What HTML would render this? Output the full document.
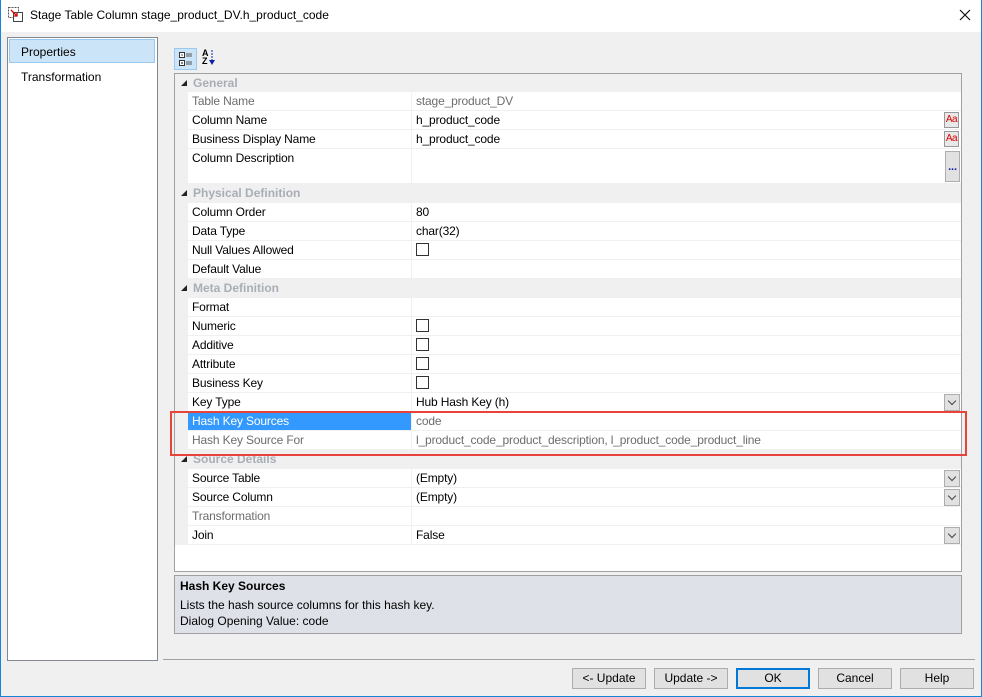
<!DOCTYPE html>
<html><head><meta charset="utf-8"><style>
*{box-sizing:border-box;margin:0;padding:0}
body{width:982px;height:697px;overflow:hidden;background:#f0f0f0;font-family:"Liberation Sans",sans-serif;font-size:12px;color:#000;position:relative}
.a{position:absolute}
.win{left:0;top:0;width:982px;height:697px;border:1px solid #1883d7;border-top:none}
.title{left:1px;top:0;width:980px;height:32px;background:#fff}
.row{position:absolute;left:188px;width:773px;height:19px;border-bottom:1px solid #f0f0f0;background:#fff;letter-spacing:-0.15px}
.row .n{position:absolute;left:4px;top:2px;white-space:nowrap}
.row .v{position:absolute;left:223px;top:0;height:18px;border-left:1px solid #f0f0f0;padding-left:4px;padding-top:2px;width:550px;white-space:nowrap}
.cat{position:absolute;left:175px;width:786px;height:19px;background:#f0f0f0}
.cat .n{position:absolute;left:18px;top:2px;color:#a9aeb6;font-weight:bold}
.cat .t{position:absolute;left:6px;top:6px;width:0;height:0;border-left:6px solid transparent;border-bottom:6px solid #222}
.g{color:#6d6d6d}
.cb{display:inline-block;width:13px;height:13px;border:1px solid #333;background:#fff;margin-top:0px}
.dd{position:absolute;right:1px;top:1px;width:16px;height:17px;background:#e1e1e1;border:1px solid #adadad}
.dd:after{content:"";position:absolute;left:4px;top:3px;width:5px;height:5px;border-right:1px solid #444;border-bottom:1px solid #444;transform:rotate(45deg)}
.aa{position:absolute;right:2px;top:1px;width:15px;height:16px;background:#e8e8e8;border:1px solid #999;color:#d00;font-size:10px;line-height:14px;text-align:center;letter-spacing:-0.5px}
.btn{position:absolute;top:668px;width:74px;height:21px;background:#e1e1e1;border:1px solid #adadad;text-align:center;line-height:19px}
</style></head><body>
<div class="a win"></div>
<div class="a title"></div>
<svg class="a" style="left:8px;top:7px" width="16" height="16"><rect x="0.5" y="0.5" width="10" height="10" fill="none" stroke="#555" stroke-dasharray="2,1"/><rect x="5.5" y="5.5" width="9" height="9" fill="#fff" stroke="#444"/><path d="M3 3 L9 9 M6 9 H9 V6" stroke="#d00" stroke-width="1.3" fill="none"/></svg>
<div class="a" style="left:30px;top:8px;font-size:12px">Stage Table Column stage_product_DV.h_product_code</div>
<svg class="a" style="left:959px;top:9px" width="12" height="12"><path d="M1 1L11 11M11 1L1 11" stroke="#111" stroke-width="1.2"/></svg>

<div class="a" style="left:7px;top:37px;width:151px;height:624px;background:#fff;border:1px solid #828790"></div>
<div class="a" style="left:9px;top:39px;width:146px;height:24px;background:#cce4f7;border:1px solid #99c9ef"></div>
<div class="a" style="left:21px;top:45px">Properties</div>
<div class="a" style="left:21px;top:70px">Transformation</div>

<div class="a" style="left:174px;top:48px;width:23px;height:22px;background:#cce4f7;border:1px solid #99c9ef"></div>
<svg class="a" style="left:178px;top:51px" width="16" height="16"><rect x="1.5" y="1.5" width="5" height="5" fill="#fff" stroke="#333"/><rect x="1.5" y="9.5" width="5" height="5" fill="#fff" stroke="#333"/><path d="M3 4H5M3 12H5M4 11V13M8 3H14M8 5H14M8 11H14M8 13H14" stroke="#555"/></svg>
<div class="a" style="left:202px;top:49px;font-size:9px;line-height:8px;font-weight:bold">A<br>Z</div>
<svg class="a" style="left:208px;top:50px" width="8" height="16"><path d="M4 0V12" stroke="#12a" stroke-dasharray="2,1"/><path d="M1 10L4 15L7 10Z" fill="#12a"/></svg>

<div class="a" style="left:174px;top:73px;width:788px;height:499px;background:#fff;border:1px solid #a0a0a0"></div>
<div class="a" style="left:175px;top:74px;width:13px;height:471px;background:#f0f0f0"></div>

<div class="cat" style="top:74px"><div class="t"></div><div class="n">General</div></div>
<div class="row" style="top:92px"><div class="n g">Table Name</div><div class="v g">stage_product_DV</div></div>
<div class="row" style="top:111px"><div class="n">Column Name</div><div class="v">h_product_code</div><div class="aa">Aa</div></div>
<div class="row" style="top:130px"><div class="n">Business Display Name</div><div class="v">h_product_code</div><div class="aa">Aa</div></div>
<div class="row" style="top:149px;height:35px"><div class="n">Column Description</div><div class="v" style="height:34px"></div><div class="a" style="right:1px;top:2px;width:15px;height:31px;background:#e1e1e1;border:1px solid #adadad;font-size:11px;text-align:center;line-height:30px;font-weight:bold;color:#12a">...</div></div>
<div class="cat" style="top:184px"><div class="t"></div><div class="n">Physical Definition</div></div>
<div class="row" style="top:203px"><div class="n">Column Order</div><div class="v">80</div></div>
<div class="row" style="top:222px"><div class="n">Data Type</div><div class="v">char(32)</div></div>
<div class="row" style="top:241px"><div class="n">Null Values Allowed</div><div class="v"><span class="cb"></span></div></div>
<div class="row" style="top:260px"><div class="n">Default Value</div><div class="v"></div></div>
<div class="cat" style="top:279px"><div class="t"></div><div class="n">Meta Definition</div></div>
<div class="row" style="top:298px"><div class="n">Format</div><div class="v"></div></div>
<div class="row" style="top:317px"><div class="n">Numeric</div><div class="v"><span class="cb"></span></div></div>
<div class="row" style="top:336px"><div class="n">Additive</div><div class="v"><span class="cb"></span></div></div>
<div class="row" style="top:355px"><div class="n">Attribute</div><div class="v"><span class="cb"></span></div></div>
<div class="row" style="top:374px"><div class="n">Business Key</div><div class="v"><span class="cb"></span></div></div>
<div class="row" style="top:393px"><div class="n">Key Type</div><div class="v">Hub Hash Key (h)</div><div class="dd"></div></div>
<div class="row" style="top:412px"><div class="a" style="left:0;top:0;width:223px;height:18px;background:#3399ff"></div><div class="n" style="color:#fff">Hash Key Sources</div><div class="v g">code</div></div>
<div class="row" style="top:431px"><div class="n g">Hash Key Source For</div><div class="v g">l_product_code_product_description, l_product_code_product_line</div></div>
<div class="cat" style="top:450px"><div class="t"></div><div class="n">Source Details</div></div>
<div class="row" style="top:469px"><div class="n">Source Table</div><div class="v">(Empty)</div><div class="dd"></div></div>
<div class="row" style="top:488px"><div class="n">Source Column</div><div class="v">(Empty)</div><div class="dd"></div></div>
<div class="row" style="top:507px"><div class="n g">Transformation</div><div class="v"></div></div>
<div class="row" style="top:526px"><div class="n">Join</div><div class="v">False</div><div class="dd"></div></div>

<div class="a" style="left:170px;top:411px;width:797px;height:45px;border:2px solid #e8433b"></div>

<div class="a" style="left:174px;top:575px;width:788px;height:59px;background:#dfe1e8;border:1px solid #a0a0a0"></div>
<div class="a" style="left:180px;top:579px;font-weight:bold">Hash Key Sources</div>
<div class="a" style="left:180px;top:598px">Lists the hash source columns for this hash key.</div>
<div class="a" style="left:180px;top:614px">Dialog Opening Value: code</div>

<div class="a" style="left:163px;top:659px;width:812px;height:1px;background:#a0a0a0"></div>
<div class="btn" style="left:572px">&lt;- Update</div>
<div class="btn" style="left:654px">Update -&gt;</div>
<div class="btn" style="left:736px;border:2px solid #0078d7;line-height:17px">OK</div>
<div class="btn" style="left:818px">Cancel</div>
<div class="btn" style="left:900px">Help</div>
</body></html>
